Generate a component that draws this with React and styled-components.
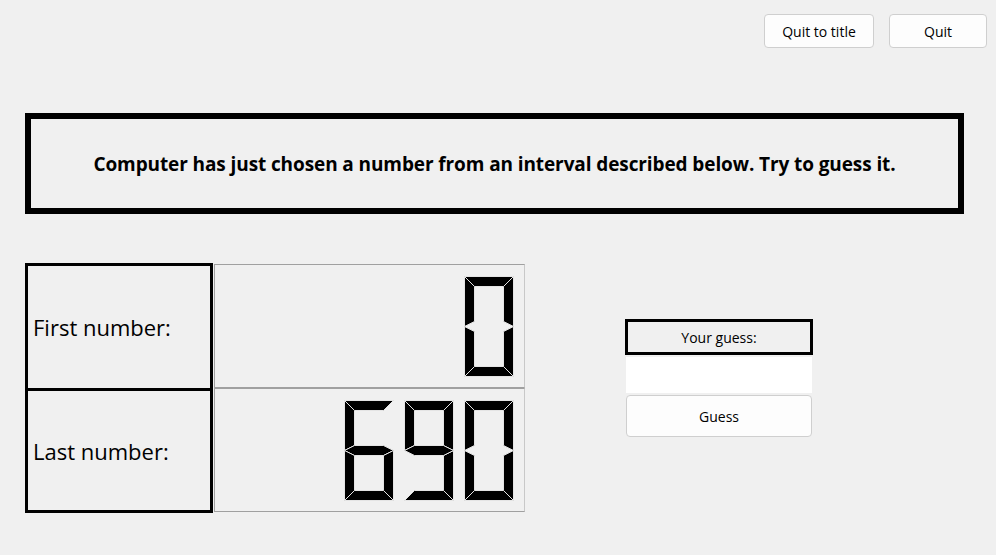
import React from "react";
import styled, { createGlobalStyle } from "styled-components";

const Global = createGlobalStyle`
  html, body { margin: 0; padding: 0; background: #f0f0f0; }
  body { font-family: "Open Sans", "Noto Sans", "Liberation Sans", sans-serif; color: #000; }
  #root { width: 996px; height: 555px; overflow: hidden; }
`;

const Page = styled.div`
  display: flex;
  flex-direction: column;
  width: 996px;
  height: 555px;
`;

const TopBar = styled.div`
  display: flex;
  justify-content: flex-end;
  gap: 15px;
  padding: 14px 9px 0 0;
`;

const PushButton = styled.button`
  width: ${(p) => p.$w}px;
  height: ${(p) => p.$h || 34}px;
  box-sizing: border-box;
  border: 1px solid #cfcfcf;
  border-radius: 4px;
  background: #fdfdfd;
  font-family: inherit;
  font-size: 14px;
  color: #000;
  padding: 0;
  margin: 0;
`;

const Banner = styled.div`
  margin: 65px 32px 0 25px;
  height: 101px;
  box-sizing: border-box;
  border: 6px solid #000;
  display: flex;
  align-items: center;
  justify-content: center;
  font-weight: 700;
  font-size: 19px;
  letter-spacing: -0.1px;
`;

const Main = styled.div`
  display: flex;
  align-items: flex-start;
  margin-top: 49px;
  padding-left: 25px;
`;

const LabelCol = styled.div`
  width: 188px;
  height: 250px;
  box-sizing: border-box;
  border: 3px solid #000;
  display: flex;
  flex-direction: column;
`;

const LabelCell = styled.div`
  display: flex;
  align-items: center;
  padding-left: 5px;
  font-size: 22px;
  height: ${(p) => (p.$h ? `${p.$h}px` : "auto")};
  border-bottom: ${(p) => (p.$divider ? "3px solid #000" : "none")};
  flex: ${(p) => (p.$grow ? 1 : "none")};
`;

const DisplayCol = styled.div`
  display: flex;
  flex-direction: column;
  width: 311px;
  margin: 1px 0 0 1px;
`;

const Display = styled.div`
  height: 124px;
  box-sizing: border-box;
  border: 1px solid #a0a0a0;
  border-right-color: #c8c8c8;
  display: flex;
  align-items: center;
  justify-content: flex-end;
  gap: 10px;
  padding-right: 10px;
`;

const GuessCol = styled.div`
  display: flex;
  flex-direction: column;
  width: 188px;
  margin: 56px 0 0 100px;
`;

const GuessLabel = styled.div`
  height: 36px;
  box-sizing: border-box;
  border: 3px solid #000;
  display: flex;
  align-items: center;
  justify-content: center;
  font-size: 14px;
`;

const GuessInput = styled.input`
  margin: 2px 1px 0;
  height: 36px;
  box-sizing: border-box;
  border: none;
  outline: none;
  background: #fff;
  font-family: inherit;
  font-size: 14px;
  padding: 0 4px;
`;

const GuessButtonWrap = styled.div`
  display: flex;
  margin: 2px 1px 0;
`;

const W = 49;
const H = 100;
const T = 10;
const M = H / 2;
const HT = T / 2;

const SEGS = {
  a: [[0, 0], [W, 0], [W - T, T], [T, T]],
  b: [[W, 0], [W, M], [W - T, M - HT], [W - T, T]],
  c: [[W, M], [W, H], [W - T, H - T], [W - T, M + HT]],
  d: [[0, H], [T, H - T], [W - T, H - T], [W, H]],
  e: [[0, M], [T, M + HT], [T, H - T], [0, H]],
  f: [[0, 0], [T, T], [T, M - HT], [0, M]],
  g: [[0, M], [T, M - HT], [W - T, M - HT], [W, M], [W - T, M + HT], [T, M + HT]],
};

const DIGITS = {
  "0": "abcdef",
  "1": "bc",
  "2": "abged",
  "3": "abgcd",
  "4": "fgbc",
  "5": "afgcd",
  "6": "afgedc",
  "7": "abc",
  "8": "abcdefg",
  "9": "abcdfg",
};

const DigitSvg = styled.svg`
  display: block;
  flex: none;
`;

function Digit({ ch }) {
  const on = DIGITS[ch] || "";
  return (
    <DigitSvg width={W + 1} height={H + 1} viewBox={`-0.5 -0.5 ${W + 1} ${H + 1}`}>
      {on.split("").map((s) => (
        <polygon
          key={s}
          points={SEGS[s].map((p) => p.join(",")).join(" ")}
          fill="#000"
          stroke="#e4e4e4"
          strokeWidth="1"
          strokeLinejoin="miter"
        />
      ))}
    </DigitSvg>
  );
}

function LcdNumber({ value }) {
  return (
    <Display>
      {String(value)
        .split("")
        .map((ch, i) => (
          <Digit key={i} ch={ch} />
        ))}
    </Display>
  );
}

export default function App() {
  return (
    <>
      <Global />
      <Page>
        <TopBar>
          <PushButton $w={110}>Quit to title</PushButton>
          <PushButton $w={98}>Quit</PushButton>
        </TopBar>
        <Banner>
          Computer has just chosen a number from an interval described below. Try to guess it.
        </Banner>
        <Main>
          <LabelCol>
            <LabelCell $h={122} $divider>First number:</LabelCell>
            <LabelCell $grow>Last number:</LabelCell>
          </LabelCol>
          <DisplayCol>
            <LcdNumber value={0} />
            <LcdNumber value={690} />
          </DisplayCol>
          <GuessCol>
            <GuessLabel>Your guess:</GuessLabel>
            <GuessInput type="text" defaultValue="" />
            <GuessButtonWrap>
              <PushButton $w={186} $h={42}>Guess</PushButton>
            </GuessButtonWrap>
          </GuessCol>
        </Main>
      </Page>
    </>
  );
}
